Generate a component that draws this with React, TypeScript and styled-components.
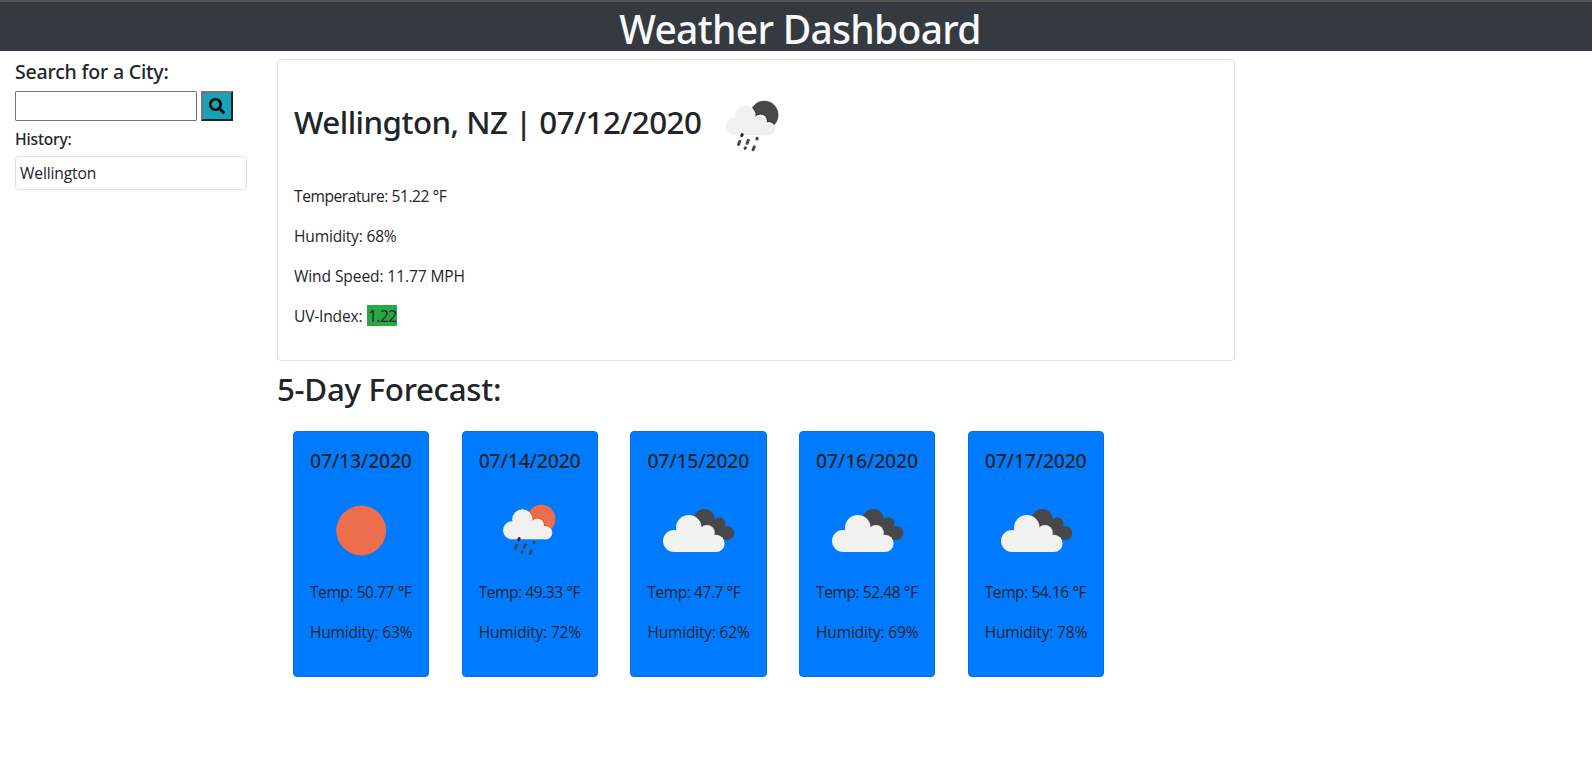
import React from 'react';
import styled, { createGlobalStyle } from 'styled-components';
import { FaSearch } from 'react-icons/fa';

const GlobalStyle = createGlobalStyle`
  *, *::before, *::after { box-sizing: border-box; }
  body {
    margin: 0;
    background: #fff;
    color: #212529;
    font-family: 'Open Sans', 'Noto Sans', sans-serif;
    font-size: 15.6px;
    line-height: 24px;
  }
  h1, h2, h3, p { margin: 0; }
`;

const Header = styled.header`
  height: 51px;
  border-top: 2px solid #555;
  background: #343a40;
  display: flex;
  justify-content: center;
`;

const Heading = styled.h2<{ $size: number; $tracking: number }>`
  font-family: 'Noto Sans', sans-serif;
  font-weight: 500;
  font-size: ${p => p.$size}px;
  line-height: 1.2;
  letter-spacing: ${p => p.$tracking}px;
  white-space: nowrap;
`;

const Title = styled(Heading)`
  color: #f8f9fa;
  line-height: 53px;
  padding-left: 8px;
`;

const Layout = styled.div`
  display: flex;
`;

const Sidebar = styled.aside`
  width: 277px;
  padding: 9px 30px 0 15px;
`;

const SearchTitle = styled(Heading)`
  line-height: 24px;
  margin-bottom: 7px;
`;

const SearchForm = styled.form`
  display: flex;
  gap: 4px;
`;

const SearchInput = styled.input`
  width: 182px;
  height: 30px;
  padding: 1px 2px;
  border: 1px solid #767676;
  border-radius: 1px;
  background: #fff;
  font: inherit;
`;

const SearchButton = styled.button`
  width: 32px;
  height: 30px;
  padding: 0;
  display: flex;
  align-items: center;
  justify-content: center;
  color: #000;
  background: #17a2b8;
  border: 2px solid;
  border-color: #767676 #212121 #212121 #767676;
`;

const HistoryTitle = styled(Heading)`
  margin: 9px 0 7px;
  line-height: 19px;
`;

const HistoryItem = styled.div`
  height: 34px;
  width: 232px;
  padding: 4px;
  border: 1px solid #dfdfdf;
  border-radius: 4px;
  letter-spacing: -0.13px;
`;

const Main = styled.main`
  width: 958px;
  padding-top: 8px;
`;

const CurrentCard = styled.section`
  padding: 16px;
  border: 1px solid #dfdfdf;
  border-radius: 4px;
`;

const CurrentHead = styled.div`
  display: flex;
  align-items: center;
  height: 100px;
  margin-bottom: 8px;
`;

const CurrentTitle = styled(Heading)`
  width: 408px;
  padding-bottom: 6px;
`;

const Reading = styled.p<{ $tracking: number }>`
  letter-spacing: ${p => p.$tracking}px;
  margin-bottom: 16px;
  white-space: nowrap;
`;

const UvValue = styled.span`
  display: inline-block;
  width: 30px;
  height: 21px;
  line-height: 22px;
  margin-left: 1px;
  padding-left: 1px;
  vertical-align: top;
  margin-top: 1px;
  background: #28a745;
  letter-spacing: -0.6px;
`;

const ForecastTitle = styled(Heading)`
  margin: 9px 0 23px 0;
  line-height: 38px;
`;

const ForecastRow = styled.div`
  display: flex;
  gap: 32.4px;
  padding-left: 16px;
`;

const DayCard = styled.article`
  width: 136.3px;
  padding: 16px;
  background: #007bff;
  border: 1px solid #0070e6;
  border-radius: 4px;
`;

const DayDate = styled(Heading)`
  line-height: 26px;
  margin-bottom: 6px;
`;

const IconSvg = styled.svg`
  display: block;
  width: 100px;
  height: 100px;
  flex: none;
`;

type IconKind = 'clear' | 'rainDay' | 'rainNight' | 'clouds';

const SmallCloud = () => (
  <>
    <circle cx="33" cy="50.3" r="9" />
    <circle cx="43.4" cy="39.5" r="10.2" />
    <circle cx="58.4" cy="45" r="6.6" />
    <circle cx="66.6" cy="52.8" r="6.7" />
    <path d="M33 59.3V46H43L58 43L66 50V59.3z" />
  </>
);

const LargeCloud = () => (
  <>
    <circle cx="27" cy="61" r="11" />
    <circle cx="41.8" cy="47.8" r="12.8" />
    <circle cx="60" cy="52.8" r="7.8" />
    <circle cx="69" cy="63.4" r="8.6" />
    <path d="M27 72V55H42L60 50L69 60V72z" />
  </>
);

const Rain = ({ disc, edge }: { disc: string; edge: string }) => (
  <>
    <clipPath id={`disc${edge.slice(1)}`}>
      <circle cx="62.3" cy="38.9" r="14.1" />
    </clipPath>
    <circle cx="62.3" cy="38.9" r="14.1" fill={disc} />
    <g fill="none" stroke={edge} strokeWidth="1.8" clipPath={`url(#disc${edge.slice(1)})`}>
      <SmallCloud />
    </g>
    <g fill="#f0f0f0"><SmallCloud /></g>
    <g stroke="#484848" strokeWidth="3" strokeLinecap="round">
      <path d="M40.2 58.6l-.5 1.1" stroke="#2b2b2b" />
      <path d="M37.7 65.5l-1.2 2.9M46.3 64.4l-1.2 2.9M52.3 70.9l-1.2 2.9" />
      <path d="M55.2 62.4l-.3.6M43.4 71.8l-.3.6" />
    </g>
  </>
);

const WeatherIcon = ({ kind }: { kind: IconKind }) => (
  <IconSvg viewBox="0 0 100 100">
    {kind === 'clear' && <circle cx="51.2" cy="50.5" r="24.9" fill="#ec6e4c" />}
    {kind === 'rainDay' && <Rain disc="#ec6e4c" edge="#ea4a2c" />}
    {kind === 'rainNight' && <Rain disc="#484848" edge="#303032" />}
    {kind === 'clouds' && (
      <>
        <g fill="#484848">
          <circle cx="57.3" cy="39.5" r="10.6" />
          <circle cx="72.4" cy="43.5" r="6.2" />
          <circle cx="80.2" cy="53" r="7.1" />
          <path d="M55 45L66 38L74 46L79 60L60 58z" />
        </g>
        <g fill="#f2f2f0"><LargeCloud /></g>
      </>
    )}
  </IconSvg>
);

const days: { date: string; kind: IconKind; temp: string; humidity: string }[] = [
  { date: '07/13/2020', kind: 'clear', temp: '50.77', humidity: '63%' },
  { date: '07/14/2020', kind: 'rainDay', temp: '49.33', humidity: '72%' },
  { date: '07/15/2020', kind: 'clouds', temp: '47.7', humidity: '62%' },
  { date: '07/16/2020', kind: 'clouds', temp: '52.48', humidity: '69%' },
  { date: '07/17/2020', kind: 'clouds', temp: '54.16', humidity: '78%' },
];

export default function App() {
  return (
    <>
      <GlobalStyle />
      <Header>
        <Title as="h1" $size={39} $tracking={-0.7}>Weather Dashboard</Title>
      </Header>
      <Layout>
        <Sidebar>
          <SearchTitle as="h3" $size={19.5} $tracking={-0.19}>Search for a City:</SearchTitle>
          <SearchForm onSubmit={e => e.preventDefault()}>
            <SearchInput type="text" aria-label="City" />
            <SearchButton type="submit" aria-label="Search"><FaSearch size={16} /></SearchButton>
          </SearchForm>
          <HistoryTitle as="h3" $size={15.6} $tracking={-0.17}>History:</HistoryTitle>
          <HistoryItem>Wellington</HistoryItem>
        </Sidebar>
        <Main>
          <CurrentCard>
            <CurrentHead>
              <CurrentTitle $size={31.3} $tracking={-0.53}>Wellington, NZ | 07/12/2020</CurrentTitle>
              <WeatherIcon kind="rainNight" />
            </CurrentHead>
            <Reading $tracking={-0.46}>Temperature: 51.22 °F</Reading>
            <Reading $tracking={-0.2}>Humidity: 68%</Reading>
            <Reading $tracking={-0.12}>Wind Speed: 11.77 MPH</Reading>
            <Reading $tracking={-0.2}>UV-Index: <UvValue>1.22</UvValue></Reading>
          </CurrentCard>
          <ForecastTitle $size={31.3} $tracking={-0.3}>5-Day Forecast:</ForecastTitle>
          <ForecastRow>
            {days.map(d => (
              <DayCard key={d.date}>
                <DayDate as="h3" $size={19.5} $tracking={-0.25}>{d.date}</DayDate>
                <WeatherIcon kind={d.kind} />
                <Reading $tracking={-0.47}>Temp: {d.temp} °F</Reading>
                <Reading $tracking={-0.22}>Humidity: {d.humidity}</Reading>
              </DayCard>
            ))}
          </ForecastRow>
        </Main>
      </Layout>
    </>
  );
}
